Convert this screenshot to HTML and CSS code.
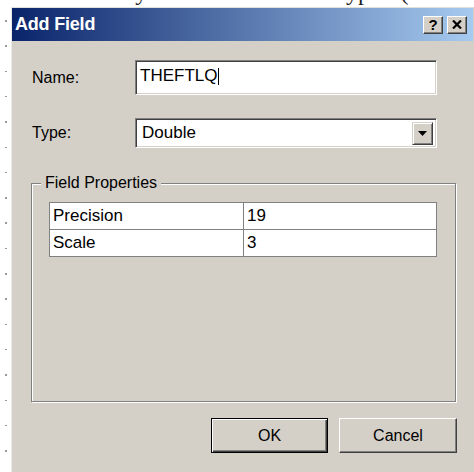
FILE: index.html
```html
<!DOCTYPE html>
<html lang="en">
<head>
<meta charset="utf-8">
<title>Add Field</title>
<link rel="stylesheet" href="styles.css">
</head>
<body>
  <div class="doc-line"><span>carefully with the new type (a Double field)</span></div>
  <div class="stage">
    <div class="ruler"></div>
    <div class="dialog">
      <div class="titlebar">
        <span class="title">Add Field</span>
        <div class="caption-buttons">
          <button class="cap-btn help">?</button>
          <button class="cap-btn close" aria-label="Close">
            <svg width="10" height="9" viewBox="0 0 10 9"><path d="M1 0.5 L9 8.5 M9 0.5 L1 8.5" stroke="#000" stroke-width="2.2" fill="none"/></svg>
          </button>
        </div>
      </div>
      <div class="body">
        <div class="form">
          <label class="lbl">Name:</label>
          <div class="field name-field"><span>THEFTLQ</span><span class="caret"></span></div>
          <label class="lbl">Type:</label>
          <div class="field combo">
            <span class="combo-value">Double</span>
            <span class="drop-btn"><svg width="9" height="5" viewBox="0 0 9 5"><path d="M0 0 H9 L4.5 5 Z" fill="#000"/></svg></span>
          </div>
        </div>
        <fieldset class="group">
          <legend>Field Properties</legend>
          <table class="props">
            <colgroup><col class="col-key"><col></colgroup>
            <tr><td>Precision</td><td>19</td></tr>
            <tr><td>Scale</td><td>3</td></tr>
          </table>
        </fieldset>
        <div class="actions">
          <button class="btn default">OK</button>
          <button class="btn">Cancel</button>
        </div>
      </div>
    </div>
  </div>
</body>
</html>
```
FILE: styles.css
```css
* { box-sizing: border-box; }

html, body { margin: 0; }

body {
  width: 474px;
  height: 472px;
  overflow: hidden;
  background: #fff;
  font-family: "Liberation Sans", Arial, sans-serif;
  color: #000;
  display: flex;
  flex-direction: column;
}

/* strip of the document text above the dialog; only its lowest edge shows */
.doc-line {
  height: 7px;
  flex: none;
  overflow: hidden;
  font-family: "Liberation Serif", "Times New Roman", serif;
  font-size: 24px;
  color: #222;
}
.doc-line span {
  display: block;
  white-space: nowrap;
  line-height: 24px;
  margin-top: -20px;
  padding-left: 62px;
  word-spacing: 14px;
}

.stage {
  flex: 1;
  display: flex;
  min-height: 0;
}

/* margin ruler with small tick marks */
.ruler {
  width: 11px;
  flex: none;
  background:
    repeating-linear-gradient(to bottom, transparent 0 13px, #9a9a9a 13px 14.5px, transparent 14.5px 25.3px) 5px 0 / 2px 100% no-repeat,
    #fff;
}

.dialog {
  flex: 1;
  display: flex;
  flex-direction: column;
  background: #d4d0c8;
  border-left: 1px solid #ecebe6;
}

.titlebar {
  height: 34px;
  flex: none;
  margin-right: 1px;
  display: flex;
  align-items: center;
  justify-content: space-between;
  padding: 0 6px 0 3px;
  background: linear-gradient(to right, #0a246a, #a6caf0);
  border-top: 1px solid #e2e0da;
}
.title {
  color: #fff;
  font-weight: bold;
  font-size: 18px;
  letter-spacing: -0.2px;
}
.caption-buttons {
  display: flex;
  gap: 4px;
}
.cap-btn {
  width: 20px;
  height: 18px;
  padding: 0;
  margin: 0;
  background: #d4d0c8;
  border: 1px solid;
  border-color: #fff #404040 #404040 #fff;
  box-shadow: inset -1px -1px 0 #808080;
  display: flex;
  align-items: center;
  justify-content: center;
  font: bold 15px "Liberation Sans", Arial, sans-serif;
  color: #000;
}

.body {
  flex: 1;
  min-height: 0;
  display: flex;
  flex-direction: column;
  padding: 19px 17px 19px 19px;
}

.form {
  display: grid;
  grid-template-columns: 104px 302px;
  grid-template-rows: 35px 30px;
  row-gap: 23px;
  align-items: center;
}
.lbl {
  font-size: 16px;
  padding-left: 1px;
}

/* sunken edit box */
.field {
  height: 100%;
  display: flex;
  align-items: center;
  background: #fff;
  border: 1px solid;
  border-color: #808080 #fff #fff #808080;
  box-shadow: inset 1px 1px 0 #404040, inset -1px -1px 0 #d4d0c8;
  font-size: 17px;
}
.name-field {
  padding: 0 0 3px 4px;
}
.caret {
  width: 1px;
  height: 17px;
  margin-left: 1px;
  background: #000;
}

.combo {
  align-items: stretch;
}
.combo-value {
  flex: 1;
  display: flex;
  align-items: center;
  padding-left: 6px;
}
.drop-btn {
  width: 21px;
  margin: 3px 3px 2px 0;
  display: flex;
  align-items: center;
  justify-content: center;
  background: #d4d0c8;
  border: 1px solid;
  border-color: #d4d0c8 #404040 #404040 #d4d0c8;
  box-shadow: inset 1px 1px 0 #fff, inset -1px -1px 0 #808080;
}

/* etched group box */
.group {
  flex: 1;
  min-width: 0;
  margin: 26px 1px 0 0;
  padding: 10px 18px 0 17px;
  border: 1px solid #808080;
  box-shadow: inset 1px 1px 0 #fff, 1px 1px 0 #fff;
}
.group legend {
  font-size: 16px;
  line-height: 18px;
  padding: 0 4px;
  margin-left: -8px;
  background: #d4d0c8;
}

.props {
  width: 388px;
  border-collapse: collapse;
  background: #fff;
  font-size: 17px;
}
.props .col-key { width: 194px; }
.props td {
  height: 27px;
  padding: 0 3px;
  border: 1px solid #808080;
}

.actions {
  display: flex;
  justify-content: flex-end;
  gap: 11px;
  margin-top: 16px;
}
.btn {
  width: 118px;
  height: 35px;
  margin: 0;
  padding: 0;
  font: 16px "Liberation Sans", Arial, sans-serif;
  color: #000;
  background: #d4d0c8;
  border: 1px solid;
  border-color: #fff #404040 #404040 #fff;
  box-shadow: inset -1px -1px 0 #808080;
}
.btn.default {
  width: 117px;
  border: 1px solid #000;
  box-shadow: inset 1px 1px 0 #fff, inset -1px -1px 0 #404040, inset -2px -2px 0 #808080;
}
```
